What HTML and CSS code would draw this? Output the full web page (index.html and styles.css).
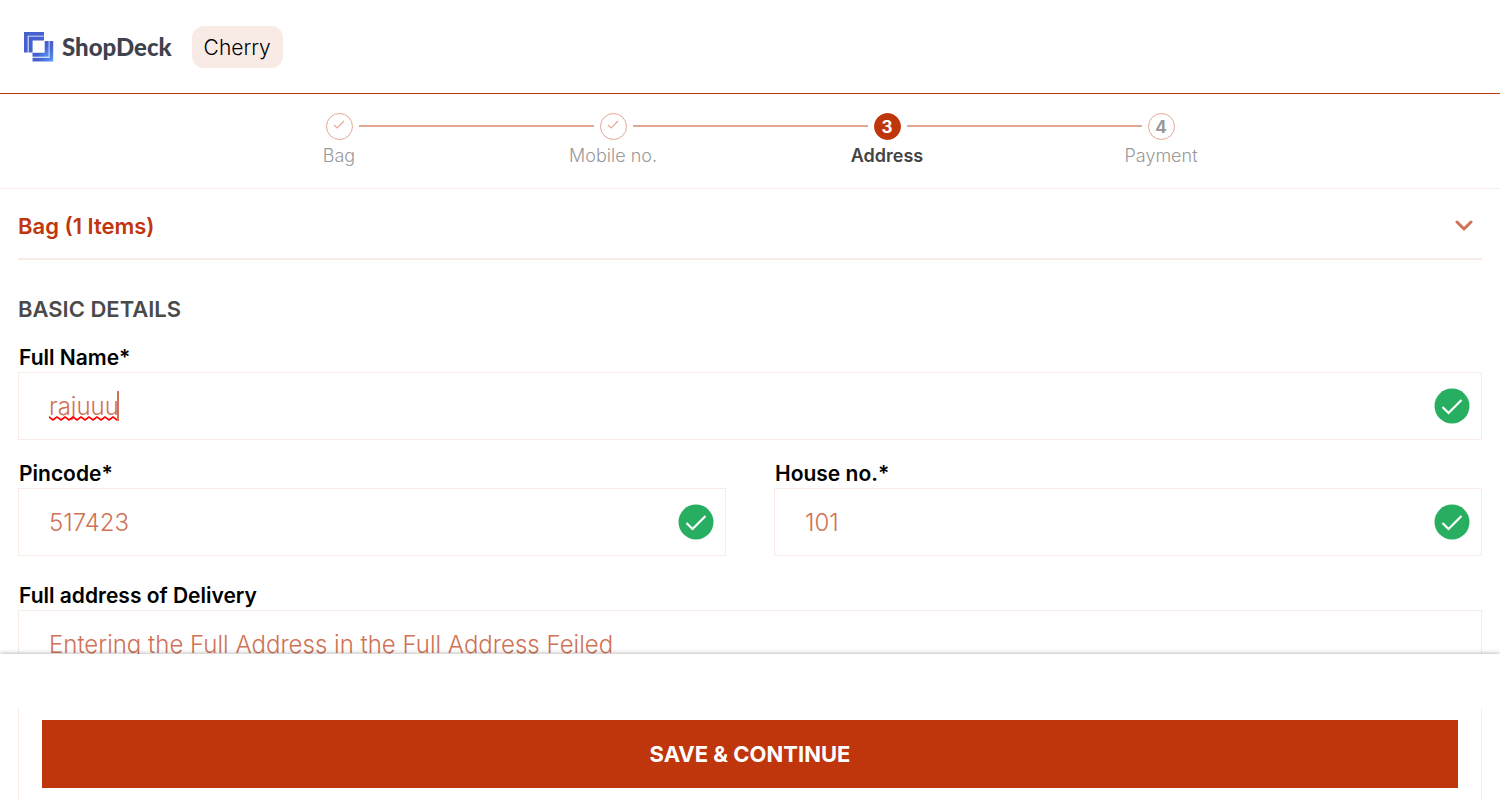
FILE: index.html
```html
<!DOCTYPE html>
<html lang="en">
<head>
<meta charset="utf-8">
<meta name="viewport" content="width=device-width, initial-scale=1">
<title>ShopDeck – Address</title>
<link rel="stylesheet" href="styles.css">
</head>
<body>
<svg class="defs" aria-hidden="true">
  <symbol id="valid" viewBox="0 0 36 36">
    <circle cx="18" cy="18" r="17.5" fill="#27ae60"/>
    <path d="M8.5 19 14.5 25 27.5 12" fill="none" stroke="#fff" stroke-width="2.2"/>
  </symbol>
  <symbol id="tick" viewBox="0 0 12 12">
    <path d="M1 6 4.2 9 11 2" fill="none" stroke="#e3a693" stroke-width="1.1"/>
  </symbol>
</svg>
<header class="topbar">
  <a class="brand" href="#">
    <svg class="brand-mark" viewBox="0 0 30 30" aria-hidden="true">
      <defs>
        <linearGradient id="blue" x1="0" y1="0" x2="1" y2="1">
          <stop offset=".6" stop-color="#4561d0"/><stop offset="1" stop-color="#5b9cf5"/>
        </linearGradient>
      </defs>
      <path d="M0 0H20V3.7H3.7V20.5H0Z" fill="url(#blue)"/>
      <path d="M4.6 4.6H20V8.6H8.6V20.5H4.6Z" fill="#4561d0"/>
      <path d="M20.7 9H24.7V24.7H8.5V20.7H20.7Z" fill="url(#blue)"/>
      <path d="M25.5 9H29.2V29.5H8.5V25.8H25.5Z" fill="url(#blue)"/>
    </svg>
    <span class="brand-name">ShopDeck</span>
  </a>
  <span class="store">Cherry</span>
</header>

<nav class="progress" aria-label="Checkout progress">
  <ol class="steps">
    <li class="step"><span class="dot"><svg class="tick"><use href="#tick"/></svg></span><span class="step-name">Bag</span></li>
    <li class="step"><span class="dot"><svg class="tick"><use href="#tick"/></svg></span><span class="step-name">Mobile no.</span></li>
    <li class="step current" aria-current="step"><span class="dot">3</span><span class="step-name">Address</span></li>
    <li class="step"><span class="dot">4</span><span class="step-name">Payment</span></li>
  </ol>
</nav>

<main class="content">
  <button class="bag" type="button">
    <span>Bag (1 Items)</span>
    <svg class="chevron" viewBox="0 0 18 12" aria-hidden="true"><path d="M2 2 9 9 16 2" fill="none" stroke="#cf7255" stroke-width="3" stroke-linecap="round" stroke-linejoin="round"/></svg>
  </button>

  <form class="form" id="address-form">
    <h1 class="section-title">BASIC DETAILS</h1>
    <div class="field wide">
      <label for="name">Full Name*</label>
      <div class="control">
        <input id="name" type="text" value="rajuuu" spellcheck="false">
        <span class="caret"><svg class="squiggle" aria-hidden="true"><defs><pattern id="wave" width="8" height="5" patternUnits="userSpaceOnUse"><path d="M-1 .2 0 1 4 4 8 1 9 .2" fill="none" stroke="#f00" stroke-width="1.6"/></pattern></defs><rect width="100%" height="5" fill="url(#wave)"/></svg></span>
        <svg class="valid"><use href="#valid"/></svg>
      </div>
    </div>
    <div class="field">
      <label for="pin">Pincode*</label>
      <div class="control">
        <input id="pin" type="text" inputmode="numeric" value="517423">
        <svg class="valid"><use href="#valid"/></svg>
      </div>
    </div>
    <div class="field">
      <label for="house">House no.*</label>
      <div class="control">
        <input id="house" type="text" value="101">
        <svg class="valid"><use href="#valid"/></svg>
      </div>
    </div>
    <div class="field wide delivery">
      <label for="address">Full address of Delivery</label>
      <textarea id="address" rows="6" spellcheck="false">Entering the Full Address in the Full Address Feiled</textarea>
    </div>
  </form>
</main>

<footer class="actions">
  <div class="strip"></div>
  <div class="save-row"><button class="save" type="submit" form="address-form">SAVE &amp; CONTINUE</button></div>
</footer>
</body>
</html>
```
FILE: styles.css
```css
* { box-sizing: border-box; }
html { scrollbar-width: none; }
body {
  margin: 0;
  background: #fff;
  color: #000;
  font-family: Inter, "Noto Sans", sans-serif;
}
button, input, textarea { font: inherit; }
.defs { display: none; }

.topbar {
  display: flex;
  align-items: center;
  gap: 20px;
  height: 94px;
  padding: 0 24px;
  border-bottom: 1px solid #bf360c;
}
.brand {
  display: flex;
  align-items: center;
  gap: 8px;
  color: #3d424d;
  text-decoration: none;
}
.brand-mark { width: 30px; height: 30px; }
.brand-name { font-family: Lato, sans-serif; font-size: 24px; font-weight: 900; line-height: 30px; }
.store {
  padding: 7px 12px 5px;
  border-radius: 12px;
  background: #f8eae5;
  font-size: 21px;
  font-weight: 300;
  line-height: 30px;
}

.progress { padding: 19px 24px 20px; border-bottom: 1px solid #f8eae5; }
.steps {
  display: grid;
  grid-template-columns: repeat(4, 1fr);
  max-width: 1096px;
  margin: 0 auto;
  padding: 0;
  list-style: none;
}
.step {
  display: grid;
  grid-template-columns: 1fr 27px 1fr;
  align-items: center;
  column-gap: 6px;
  color: #999;
}
.step::before, .step::after { content: ""; height: 2px; margin-bottom: 2px; background: #e3a693; }
.step:first-child::before, .step:last-child::after { visibility: hidden; }
.step::before { grid-area: 1 / 1; }
.step::after { grid-area: 1 / 3; }
.dot {
  grid-area: 1 / 2;
  display: flex;
  align-items: center;
  justify-content: center;
  height: 27px;
  border: 1px solid #e3a693;
  border-radius: 50%;
  font-size: 17px;
  font-weight: 700;
}
.tick { width: 12px; height: 12px; margin-bottom: 3px; }
.step-name {
  grid-area: 2 / 1 / 3 / 4;
  margin-top: 4px;
  font-size: 18px;
  font-weight: 300;
  line-height: 24px;
  text-align: center;
}
.current .dot { border-color: #bf360c; background: #bf360c; color: #fff; }
.current .step-name { color: #444; font-weight: 600; }

.content { padding: 0 18px 24px; }
.bag {
  display: flex;
  align-items: center;
  justify-content: space-between;
  width: 100%;
  height: 71px;
  padding: 5px 9px 0 0;
  border: 0;
  border-bottom: 2px solid #f8eae5;
  background: none;
  color: #bf360c;
  font-size: 22px;
  font-weight: 600;
}
.chevron { width: 18px; height: 12px; }

.form {
  display: grid;
  grid-template-columns: 1fr 1fr;
  column-gap: 48px;
  row-gap: 20px;
  padding-top: 35px;
}
.wide, .section-title { grid-column: 1 / -1; }
.section-title {
  margin: 0;
  color: #4a4a4a;
  font-size: 22px;
  font-weight: 600;
  line-height: 29px;
}
.field label {
  display: block;
  padding-left: 1px;
  font-size: 21px;
  font-weight: 600;
  line-height: 28px;
}
.delivery { margin-top: 6px; }
.control { position: relative; }
input, textarea {
  display: block;
  width: 100%;
  border: 1px solid #f8eae5;
  border-radius: 0;
  outline: 0;
  background: #fff;
  color: #cf7255;
  font-size: 24px;
  font-weight: 300;
}
input { height: 68px; padding: 0 60px 0 30px; }
textarea { padding: 18px 30px; line-height: 32px; resize: none; }
.valid { position: absolute; top: 16px; right: 12px; width: 36px; height: 36px; }
.caret {
  position: absolute;
  top: 19px;
  left: 31px;
  width: 70px;
  height: 30px;
  border-right: 2px solid #cf7255;
}
.squiggle { position: absolute; bottom: 0; left: 0; width: 100%; height: 5px; }

.actions { position: fixed; right: 0; bottom: 0; left: 0; }
.strip { height: 54px; background: #fff; box-shadow: 0 -1px 4px rgba(0, 0, 0, .25); clip-path: inset(-6px 0 0); }
.save-row { padding: 12px 42px; }
.save {
  display: block;
  width: 100%;
  height: 68px;
  border: 0;
  background: #bf360c;
  color: #fff;
  font-size: 22px;
  font-weight: 700;
}
```
